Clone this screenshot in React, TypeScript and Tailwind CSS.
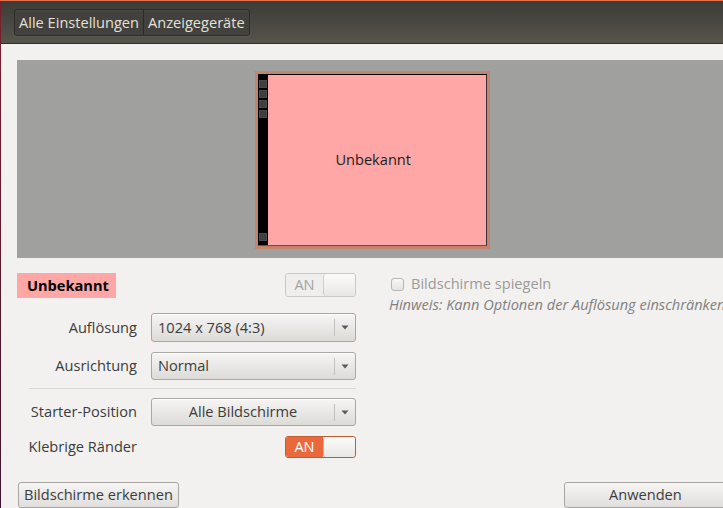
import React from 'react';

const font = "font-['Open_Sans','DejaVu_Sans',sans-serif]";

function Arrow() {
    return (
        <svg width="8" height="5" viewBox="0 0 8 5">
            <path d="M0.5 0.5 L7.5 0.5 L4 4.5 Z" fill="#5a5a58" />
        </svg>
    );
}

function Combo({ value, centered, focused }: { value: string; centered?: boolean; focused?: boolean }) {
    return (
        <div
            className={`h-full w-[205px] rounded-[3px] border bg-gradient-to-b from-[#f6f5f4] to-[#dcdbd8] flex items-center shadow-[inset_0_1px_0_rgba(255,255,255,0.8)] ${
                focused ? 'border-[#e59272]' : 'border-[#a9a8a5]'
            }`}
        >
            <span className={`flex-1 text-[14.6px] text-[#3c3c3c] ${centered ? 'text-center' : 'pl-[6px]'}`}>{value}</span>
            <span className="w-px h-[17px] bg-[#c1c0bd]" />
            <span className="w-[20px] flex justify-center">
                <Arrow />
            </span>
        </div>
    );
}

function Toggle({ on, h }: { on?: boolean; h: string }) {
    return (
        <div
            className={`${h} w-[71px] rounded-[3px] border flex overflow-hidden ${
                on ? 'border-[#c25a33]' : 'border-[#c9c8c5]'
            }`}
        >
            <div
                className={`w-[37px] flex items-center justify-center text-[14.6px] ${
                    on ? 'bg-[#e9693c] text-white' : 'bg-[#efeeec] text-[#a3a3a1]'
                }`}
            >
                AN
            </div>
            <div
                className={`flex-1 rounded-[3px] border-l bg-gradient-to-b from-[#fbfbfa] to-[#e8e7e5] ${
                    on ? 'border-[#b4b3b0]' : 'border-[#cfcecb]'
                }`}
            />
        </div>
    );
}

function Row({ label, children, h }: { label: string; children: React.ReactNode; h: string }) {
    return (
        <div className={`${h} flex items-center`}>
            <div className="w-[120px] text-right text-[14.6px] text-[#3c3c3c] whitespace-nowrap">{label}</div>
            <div className="ml-[14px] h-full flex items-center">{children}</div>
        </div>
    );
}

export default function App() {
    return (
        <div className={`w-[723px] h-[508px] overflow-hidden bg-[#f2f1f0] flex flex-col ${font}`}>
            <div className="h-px bg-[#e9704e] shrink-0" />
            <div className="flex flex-1">
                <div className="w-px bg-gradient-to-b from-[#7b1e2a] to-[#3e1530] shrink-0" />
                <div className="flex-1 flex flex-col">
                    <div className="h-[43px] shrink-0 bg-gradient-to-b from-[#3c3b37] to-[#57544c] border-b border-[#2f2e2b] flex items-start pt-[8px] pl-[13px]">
                        <div className="flex rounded-[3px] border border-[#2c2b28] shadow-[0_1px_0_rgba(255,255,255,0.06)]">
                            <div className="h-[25px] px-[4px] flex items-center bg-[#42413d] text-[14.6px] text-[#e4e0d8] border-r border-[#2c2b28] rounded-l-[3px] shadow-[inset_0_1px_0_rgba(255,255,255,0.05)]">
                                Alle Einstellungen
                            </div>
                            <div className="h-[25px] px-[4px] flex items-center bg-[#42413d] text-[14.6px] text-[#e4e0d8] rounded-r-[3px] shadow-[inset_0_1px_0_rgba(255,255,255,0.05)]">
                                Anzeigegeräte
                            </div>
                        </div>
                    </div>

                    <div className="pl-[16px] pt-[16px]">
                        <div className="h-[198px] bg-[#a0a09f] flex items-center justify-center pl-[3px] pt-[2px]">
                            <div className="w-[235px] h-[178px] bg-[#c3846f] p-[3px]">
                                <div className="h-full flex border-t border-black border-r border-r-[#333] border-b border-b-[#555]">
                                    <div className="w-[10px] bg-black flex flex-col items-center pt-[5px] pb-[4px]">
                                        <div className="w-[8px] h-[8px] bg-[#3f3f3f] border border-[#4a4a4a]" />
                                        <div className="w-[8px] h-[8px] bg-[#3f3f3f] border border-[#4a4a4a] mt-[2px]" />
                                        <div className="w-[8px] h-[8px] bg-[#3f3f3f] border border-[#4a4a4a] mt-[2px]" />
                                        <div className="w-[8px] h-[8px] bg-[#3f3f3f] border border-[#4a4a4a] mt-[2px]" />
                                        <div className="flex-1" />
                                        <div className="w-[8px] h-[8px] bg-[#3f3f3f] border border-[#4a4a4a]" />
                                    </div>
                                    <div className="flex-1 bg-[#ffa7a7] flex items-center justify-center text-[14.6px] text-[#1e1e1e] pr-[8px]">
                                        Unbekannt
                                    </div>
                                </div>
                            </div>
                        </div>

                        <div className="flex">
                            <div className="w-[339px] flex flex-col">
                                <div className="mt-[15px] flex items-start justify-between">
                                    <div className="h-[25px] w-[99px] bg-[#ffa7a7] flex items-center pl-[10px] text-[14.6px] font-bold text-black">
                                        Unbekannt
                                    </div>
                                    <Toggle h="h-[24px]" />
                                </div>
                                <div className="mt-[15px]">
                                    <Row label="Auflösung" h="h-[29px]">
                                        <Combo value="1024 x 768 (4:3)" focused />
                                    </Row>
                                </div>
                                <div className="mt-[10px]">
                                    <Row label="Ausrichtung" h="h-[28px]">
                                        <Combo value="Normal" />
                                    </Row>
                                </div>
                                <div className="mt-[8px] ml-[12px] h-px bg-[#d9d8d6]" />
                                <div className="mt-[9px]">
                                    <Row label="Starter-Position" h="h-[28px]">
                                        <Combo value="Alle Bildschirme" centered />
                                    </Row>
                                </div>
                                <div className="mt-[10px] h-[22px] flex items-center justify-between">
                                    <div className="w-[120px] text-right text-[14.6px] text-[#3c3c3c] whitespace-nowrap">Klebrige Ränder</div>
                                    <Toggle on h="h-[22px]" />
                                </div>
                            </div>
                            <div className="ml-[33px] flex flex-col pt-[18px]">
                                <div className="flex items-center h-[16px]">
                                    <div className="ml-[2px] w-[13px] h-[13px] rounded-[3px] border border-[#b8b7b4] bg-gradient-to-b from-[#f7f7f6] to-[#e4e3e1]" />
                                    <span className="ml-[7px] text-[14.6px] text-[#9b9b99]">Bildschirme spiegeln</span>
                                </div>
                                <div className="mt-[2px] text-[14.6px] italic text-[#808080] whitespace-nowrap">
                                    Hinweis: Kann Optionen der Auflösung einschränken
                                </div>
                            </div>
                        </div>

                        <div className="mt-[24px] flex items-start">
                            <div className="ml-[1px] h-[26px] px-[5px] rounded-[3px] border border-[#a7a6a3] bg-gradient-to-b from-[#f6f5f4] to-[#e0dfdd] flex items-center text-[14.6px] text-[#3c3c3c]">
                                Bildschirme erkennen
                            </div>
                            <div className="ml-auto mr-[-1px] h-[26px] w-[162px] rounded-[3px] border border-[#a7a6a3] bg-gradient-to-b from-[#f6f5f4] to-[#e0dfdd] flex items-center justify-center text-[14.6px] text-[#3c3c3c]">
                                Anwenden
                            </div>
                        </div>
                    </div>
                </div>
            </div>
        </div>
    );
}
